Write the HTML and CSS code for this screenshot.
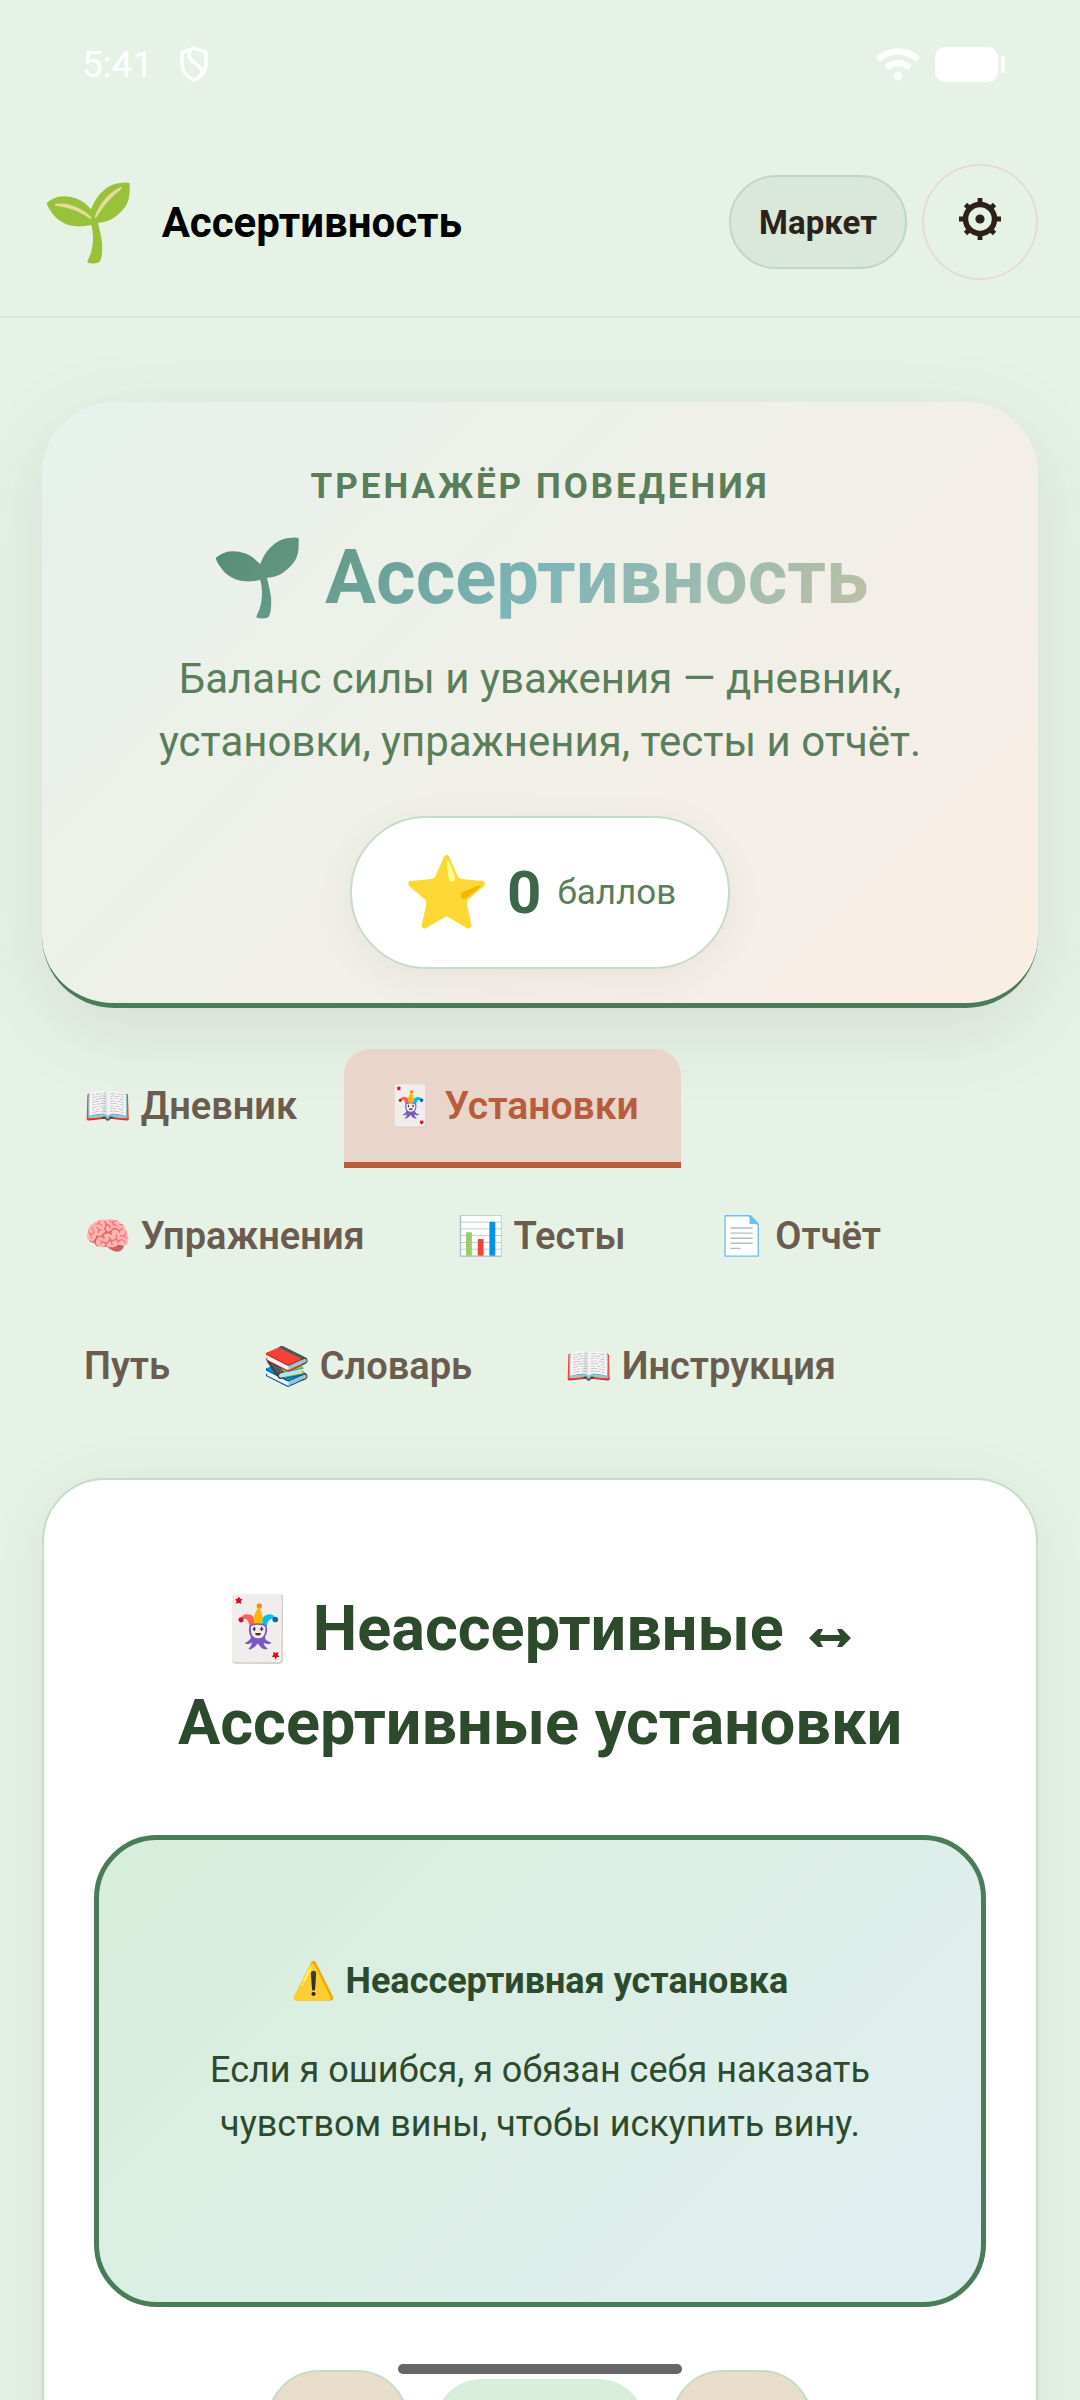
FILE: index.html
```html
<!DOCTYPE html>
<html lang="ru">
<head>
    <meta charset="UTF-8">
    <meta name="viewport" content="width=device-width, initial-scale=1.0">
    <title>Ассертивность</title>

    <link rel="stylesheet" href="styles.css">
</head>
<body>
    <div class="status-bar">
        <div class="status-left">
            <span>5:41</span>
            <svg width="30" height="36" viewBox="0 0 30 36" fill="none" stroke="#fff" stroke-width="3.4" stroke-linejoin="round">
                <path d="M15 2 L27 6.500 V17 C27 25 22 31 15 34 C8 31 3 25 3 17 V6.500 Z"/>
                <path d="M13 2.500 C8 9 10 12.500 15 16.500 C21 21 25 23 21.500 30"/>
            </svg>
        </div>
        <div class="status-right">
            <svg width="44" height="34" viewBox="0 0 44 34" fill="none" stroke="#fff" stroke-width="6.500" stroke-linecap="round">
                <path d="M4 10.500 Q22 -1.500 40 10.500"/>
                <path d="M12.500 19 Q22 13 31.500 19"/>
                <circle cx="22" cy="29" r="4.300" fill="#fff" stroke="none"/>
            </svg>
            <svg width="71" height="35" viewBox="0 0 71 35" fill="#fff">
                <rect width="63" height="35" rx="10"/>
                <path d="M66 9 C69 9 70 10 70 12 V23 C70 25 69 26 66 26 Z"/>
            </svg>
        </div>
    </div>

    <header class="header">
        <div class="brand">
            <span class="brand-icon">🌱</span>
            <span class="brand-name">Ассертивность</span>
        </div>
        <div class="header-actions">
            <button class="market-btn">Маркет</button>
            <button class="settings-btn" aria-label="Настройки">
                <svg width="42" height="42" viewBox="0 0 42 42" fill="none" stroke="#2c221a">
                    <circle cx="21" cy="21" r="14.500" stroke-width="5.500"/>
                    <path stroke-width="4.800" d="M21 0V6M21 36V42M0 21H6M36 21H42M6.500 6.500L10.500 10.500M31.500 31.500L35.500 35.500M35.500 6.500L31.500 10.500M10.500 31.500L6.500 35.500"/>
                    <circle cx="21" cy="21" r="4.600" fill="#2c221a" stroke="none"/>
                </svg>
            </button>
        </div>
    </header>

    <main>
        <section class="hero">
            <div class="hero-label">ТРЕНАЖЁР ПОВЕДЕНИЯ</div>
            <h1>🌱 Ассертивность</h1>
            <p>Баланс силы и уважения — дневник, установки, упражнения, тесты и отчёт.</p>
            <div class="score">
                <span class="score-icon">⭐</span>
                <span class="score-value">0</span>
                <span class="score-text">баллов</span>
            </div>
        </section>

        <nav class="tabs">
            <button class="tab">📖 Дневник</button>
            <button class="tab active">🃏 Установки</button>
            <button class="tab">🧠 Упражнения</button>
            <button class="tab">📊 Тесты</button>
            <button class="tab">📄 Отчёт</button>
            <button class="tab">Путь</button>
            <button class="tab">📚 Словарь</button>
            <button class="tab">📖 Инструкция</button>
        </nav>

        <section class="panel">
            <h2>🃏 Неассертивные
                <svg class="arrow" role="img" aria-label="и" width="42" height="18" viewBox="0 0 42 18">
                    <path d="M0 9 L9 0 H14 L11 6 H31 L28 0 H33 L42 9 L33 18 H28 L31 12 H11 L14 18 H9 Z" fill="#2d4a2d"/>
                </svg>
                Ассертивные установки</h2>
            <div class="flashcard">
                <h3>⚠️ Неассертивная установка</h3>
                <p>Если я ошибся, я обязан себя наказать чувством вины, чтобы искупить вину.</p>
            </div>
            <div class="card-nav">
                <button class="nav-btn" aria-label="Назад"></button>
                <span class="counter"></span>
                <button class="nav-btn" aria-label="Вперёд"></button>
            </div>
        </section>
    </main>

    <div class="home-bar"></div>
</body>
</html>
```
FILE: styles.css
```css
* {
    box-sizing: border-box;
}

body {
    margin: 0;
    height: 100vh;
    overflow: hidden;
    background-color: #e7f2e6;
    color: #2d4a2d;
    font-family: Roboto, "Noto Color Emoji", sans-serif;
}

button {
    font-family: inherit;
    margin: 0;
    cursor: pointer;
}

.status-bar {
    display: flex;
    justify-content: space-between;
    align-items: center;
    height: 122px;
    padding: 6px 74px 0 82px;
    color: #fff;
    font-size: 37px;
}

.status-left,
.status-right {
    display: flex;
    align-items: center;
    gap: 26px;
}

.status-right {
    gap: 15px;
}

.header {
    display: flex;
    justify-content: space-between;
    align-items: center;
    padding: 42px 42px 36px;
    border-bottom: 2px solid #dae5e0;
}

.brand {
    display: flex;
    align-items: center;
    gap: 25px;
    color: #000;
}

.brand-icon {
    font-size: 76px;
    line-height: 90px;
}

.brand-name {
    font-size: 42px;
    font-weight: 700;
}

.header-actions {
    display: flex;
    align-items: center;
    gap: 15px;
}

.market-btn {
    height: 94px;
    padding: 0 28px;
    border: 2px solid #bdd8c8;
    border-radius: 47px;
    background-color: #d9e8da;
    color: #2c221a;
    font-size: 33px;
    font-weight: 700;
}

.settings-btn {
    display: flex;
    align-items: center;
    justify-content: center;
    width: 116px;
    height: 116px;
    padding: 0 0 6px;
    border: 2px solid #e5dcd5;
    border-radius: 50%;
    background: none;
}

main {
    padding: 84px 42px 0;
}

.hero {
    padding: 58px 63px 34px;
    border-bottom: 5px solid #4a7c59;
    border-radius: 72px;
    background: linear-gradient(135deg, #e6f2ec 0%, #f0f0e8 50%, #f6eee8 80%, #faeee2 100%);
    box-shadow: 0 21px 84px rgba(45, 60, 55, 0.1);
    color: #5a7d5a;
    text-align: center;
}

.hero-label {
    font-size: 35px;
    font-weight: 700;
    line-height: 54px;
    letter-spacing: 3px;
}

.hero h1 {
    margin: 18px 0 25px;
    font-size: 76px;
    font-weight: 700;
    line-height: 90px;
    background: linear-gradient(135deg, #4a7c59, #7eb5b8, #d4c4a0);
    -webkit-background-clip: text;
    background-clip: text;
    color: transparent;
}

.hero p {
    margin: 0 0 43px;
    font-size: 42px;
    line-height: 63px;
}

.score {
    display: inline-flex;
    align-items: center;
    height: 153px;
    gap: 16px;
    padding: 0 52px;
    vertical-align: top;
    border: 2px solid #c5dcc5;
    border-radius: 77px;
    background-color: #fff;
    box-shadow: 0 10px 42px rgba(45, 60, 55, 0.06);
}

.score-icon {
    font-size: 70px;
    line-height: 80px;
}

.score-value {
    color: #3d6549;
    font-size: 60px;
    font-weight: 700;
}

.score-text {
    font-size: 35px;
}

.tabs {
    display: flex;
    flex-wrap: wrap;
    gap: 11px 9px;
    margin: 41px 0 50px;
}

.tab {
    padding: 29px 42px 28px;
    border: none;
    border-bottom: 6px solid transparent;
    background: none;
    color: #6b5c50;
    font-size: 38px;
    font-weight: 600;
    line-height: 56px;
}

/* активная вкладка чуть крупнее соседних */
.tab.active {
    margin: 0 -4px;
    border-radius: 26px 26px 0 0;
    border-bottom-color: #b85c3c;
    background-color: #ead5ca;
    color: #b85c3c;
    font-size: 39px;
}

.panel {
    padding: 50px;
    border: 2px solid #c5dcc5;
    border-radius: 63px;
    background-color: #fff;
    box-shadow: 0 10px 63px rgba(45, 60, 55, 0.08);
    text-align: center;
}

.panel h2 {
    margin: 52px 0 65px;
    font-size: 63px;
    font-weight: 700;
    line-height: 94px;
}

.arrow {
    margin: 0 10px 3px;
}

.flashcard {
    display: flex;
    flex-direction: column;
    justify-content: center;
    min-height: 472px;
    padding: 42px 84px;
    border: 5px solid #4a7c59;
    border-radius: 63px;
    background: linear-gradient(135deg, #d8eedb, #e0eff2);
}

.flashcard h3 {
    margin: 0 0 35px;
    font-size: 36px;
    font-weight: 700;
    line-height: 54px;
}

.flashcard p {
    margin: 0 0 37px;
    font-size: 36px;
    line-height: 54px;
}

.card-nav {
    display: flex;
    justify-content: center;
    align-items: center;
    gap: 26px;
    margin-top: 63px;
}

.nav-btn {
    width: 142px;
    height: 110px;
    border: 2px solid #c5dcc5;
    border-radius: 52px;
    background-color: #e8dccb;
}

.counter {
    width: 210px;
    height: 92px;
    border-radius: 46px;
    background-color: #d8eedb;
}

/* системная полоска поверх страницы */
.home-bar {
    position: fixed;
    bottom: 26px;
    left: 50%;
    width: 284px;
    height: 10px;
    margin-left: -142px;
    border-radius: 5px;
    background-color: #666;
}
```
